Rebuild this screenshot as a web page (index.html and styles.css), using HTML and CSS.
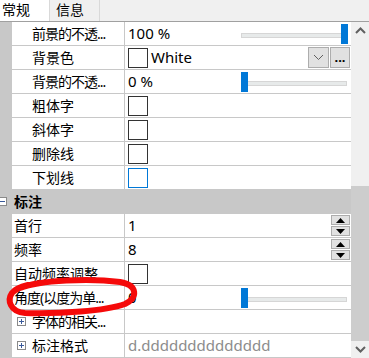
FILE: index.html
```html
<!DOCTYPE html>
<html lang="zh-CN">
<head>
  <meta charset="UTF-8" />
  <meta name="viewport" content="width=device-width, initial-scale=1.0"/>
  <title>属性</title>
  <link rel="stylesheet" href="styles.css">
</head>
<body>

<div class="panel">
  <div class="tabs">
    <div class="tab active">常规</div>
    <div class="tab">信息</div>
    <div class="tab-fill"></div>
  </div>

  <div class="main">
    <div class="grid">
      <div class="row">
        <div class="gutter"></div>
        <div class="name sub trunc">前景的不透...</div>
        <div class="value">
          <span>100 %</span>
          <div class="slider"><div class="track"></div><div class="thumb" style="left:100px"></div></div>
        </div>
      </div>

      <div class="row">
        <div class="gutter"></div>
        <div class="name sub">背景色</div>
        <div class="value">
          <span class="swatch"></span>
          <span class="color-name">White</span>
          <span class="btn drop">
            <svg width="11" height="7" viewBox="0 0 11 7"><path d="M1 1l4.5 4.5L10 1" fill="none" stroke="#606060" stroke-width="1"/></svg>
          </span>
          <span class="btn dots">...</span>
        </div>
      </div>

      <div class="row">
        <div class="gutter"></div>
        <div class="name sub trunc">背景的不透...</div>
        <div class="value">
          <span>0 %</span>
          <div class="slider"><div class="track"></div><div class="thumb" style="left:0px"></div></div>
        </div>
      </div>

      <div class="row">
        <div class="gutter"></div>
        <div class="name sub">粗体字</div>
        <div class="value"><span class="check"></span></div>
      </div>

      <div class="row">
        <div class="gutter"></div>
        <div class="name sub">斜体字</div>
        <div class="value"><span class="check"></span></div>
      </div>

      <div class="row">
        <div class="gutter"></div>
        <div class="name sub">删除线</div>
        <div class="value"><span class="check"></span></div>
      </div>

      <div class="row">
        <div class="gutter"></div>
        <div class="name sub">下划线</div>
        <div class="value"><span class="check focus"></span></div>
      </div>

      <div class="row category">
        <svg class="toggle" width="9" height="9" viewBox="0 0 9 9"><rect x="0.5" y="0.5" width="8" height="8" fill="#fff" stroke="#8a8a8a"/><path d="M2 4.5h5" stroke="#3a5a9a"/></svg>
        <span class="cat-title">标注</span>
      </div>

      <div class="row">
        <div class="gutter"></div>
        <div class="name">首行</div>
        <div class="value">
          <span>1</span>
          <div class="spin">
            <span class="spin-btn"><svg width="9" height="5" viewBox="0 0 9 5"><path d="M0 5L4.5 0L9 5z" fill="#000"/></svg></span>
            <span class="spin-btn"><svg width="9" height="5" viewBox="0 0 9 5"><path d="M0 0L4.5 5L9 0z" fill="#000"/></svg></span>
          </div>
        </div>
      </div>

      <div class="row">
        <div class="gutter"></div>
        <div class="name">频率</div>
        <div class="value">
          <span>8</span>
          <div class="spin">
            <span class="spin-btn"><svg width="9" height="5" viewBox="0 0 9 5"><path d="M0 5L4.5 0L9 5z" fill="#000"/></svg></span>
            <span class="spin-btn"><svg width="9" height="5" viewBox="0 0 9 5"><path d="M0 0L4.5 5L9 0z" fill="#000"/></svg></span>
          </div>
        </div>
      </div>

      <div class="row">
        <div class="gutter"></div>
        <div class="name">自动频率调整</div>
        <div class="value"><span class="check"></span></div>
      </div>

      <div class="row">
        <div class="gutter"></div>
        <div class="name trunc">角度(以度为单...</div>
        <div class="value">
          <span>0</span>
          <div class="slider"><div class="track"></div><div class="thumb" style="left:0px"></div></div>
        </div>
      </div>

      <div class="row">
        <div class="gutter"></div>
        <div class="name sub trunc">
          <svg class="expand" width="9" height="9" viewBox="0 0 9 9"><rect x="0.5" y="0.5" width="8" height="8" fill="#fff" stroke="#8a8a8a"/><path d="M2 4.5h5M4.5 2v5" stroke="#3a5a9a"/></svg>
          <span>字体的相关...</span>
        </div>
        <div class="value"></div>
      </div>

      <div class="row">
        <div class="gutter"></div>
        <div class="name sub">
          <svg class="expand" width="9" height="9" viewBox="0 0 9 9"><rect x="0.5" y="0.5" width="8" height="8" fill="#fff" stroke="#8a8a8a"/><path d="M2 4.5h5M4.5 2v5" stroke="#3a5a9a"/></svg>
          <span>标注格式</span>
        </div>
        <div class="value"><span class="muted">d.dddddddddddddd</span></div>
      </div>
    </div>

    <div class="scrollbar">
      <div class="sb-btn">
        <svg width="11" height="7" viewBox="0 0 11 7"><path d="M1 6l4.5-4.5L10 6" fill="none" stroke="#606060" stroke-width="2"/></svg>
      </div>
      <div class="sb-track"><div class="sb-thumb"></div></div>
      <div class="sb-btn down">
        <svg width="11" height="7" viewBox="0 0 11 7"><path d="M1 1l4.5 4.5L10 1" fill="none" stroke="#606060" stroke-width="2"/></svg>
      </div>
    </div>
  </div>

  <!-- 红色手绘圈注 -->
  <svg class="mark" width="369" height="358" viewBox="0 0 369 358">
    <path d="M20 288 C40 280 90 278 120 282 C138 285 138 298 125 304 C105 311 60 314 25 313 C10 312 7 300 12 293 C15 289 20 287 28 285" fill="none" stroke="#f50a0a" stroke-width="6" stroke-linecap="round"/>
  </svg>
</div>

</body>
</html>
```

FILE: styles.css
```css
body {
  margin: 0;
  font-family: "Noto Sans", "Noto Sans CJK SC", sans-serif;
  font-size: 15px;
  color: #000;
  background: #fff;
}
.panel {
  position: relative;
  width: 369px;
  height: 358px;
  overflow: hidden;
}
.tabs {
  display: flex;
  height: 21px;
  border-bottom: 1px solid #a0a0a0;
  background: #f0f0f0;
  font-size: 14px;
}
.tab {
  width: 50px;
  line-height: 19px;
  padding-left: 6px;
  box-sizing: border-box;
  border-right: 1px solid #d9d9d9;
}
.tab.active {
  background: #fff;
  padding-left: 2px;
}
.tab-fill {
  flex: 1;
}
.main {
  display: flex;
  height: 336px;
}
.grid {
  width: 351px;
}
.row {
  display: grid;
  grid-template-columns: 12px 112px 1fr;
  height: 23px;
  border-bottom: 1px solid #c8c8c8;
  line-height: 23px;
}
.gutter {
  background: #c8c8c8;
}
.name {
  padding-left: 2px;
  font-size: 14px;
  white-space: nowrap;
  overflow: hidden;
  display: flex;
  align-items: center;
}
.name.sub {
  padding-left: 20px;
}
/* 被截断的名称，字距收紧一点以便显示省略号 */
.name.trunc {
  letter-spacing: -1px;
}
.value {
  border-left: 1px solid #c8c8c8;
  padding-left: 3px;
  display: flex;
  align-items: center;
  white-space: nowrap;
}
.category {
  display: flex;
  align-items: center;
  background: #c8c8c8;
}
.toggle {
  margin-left: -2px;
  flex: none;
}
.cat-title {
  font-weight: bold;
  font-size: 14px;
  margin-left: 7px;
}
.expand {
  margin-left: -15px;
  margin-right: 6px;
  flex: none;
}
.slider {
  position: relative;
  width: 107px;
  height: 20px;
  margin-left: auto;
  margin-right: 3px;
}
.track {
  position: absolute;
  left: 0;
  right: 1px;
  top: 9px;
  height: 3px;
  background: #e7eaea;
  border: 1px solid #d6d6d6;
}
.thumb {
  position: absolute;
  top: 0;
  width: 7px;
  height: 20px;
  background: #0078d7;
}
.swatch,
.check {
  width: 18px;
  height: 18px;
  border: 1px solid #333;
  background: #fff;
}
.check.focus {
  border-color: #0078d7;
}
.color-name {
  margin-left: 3px;
}
.btn {
  height: 19px;
  border: 1px solid #adadad;
  background: #e1e1e1;
  display: flex;
  align-items: center;
  justify-content: center;
}
.drop {
  width: 19px;
  margin-left: auto;
}
.dots {
  width: 18px;
  margin-left: 1px;
  margin-right: 1px;
  font-weight: bold;
  font-size: 13px;
  line-height: 19px;
}
.spin {
  margin-left: auto;
  margin-right: 1px;
  display: flex;
  flex-direction: column;
  gap: 1px;
}
.spin-btn {
  width: 17px;
  height: 8px;
  border: 1px solid #adadad;
  background: #e1e1e1;
  display: flex;
  align-items: center;
  justify-content: center;
}
.muted {
  color: #8c8c8c;
}
.scrollbar {
  width: 18px;
  display: flex;
  flex-direction: column;
  background: #f0f0f0;
}
.sb-btn {
  height: 17px;
  display: flex;
  align-items: center;
  justify-content: center;
}
.sb-track {
  flex: 1;
  display: flex;
  flex-direction: column;
}
.sb-thumb {
  margin-top: auto;
  height: 155px;
  background: #cdcdcd;
}
.mark {
  position: absolute;
  left: 0;
  top: 0;
  pointer-events: none;
}
```
